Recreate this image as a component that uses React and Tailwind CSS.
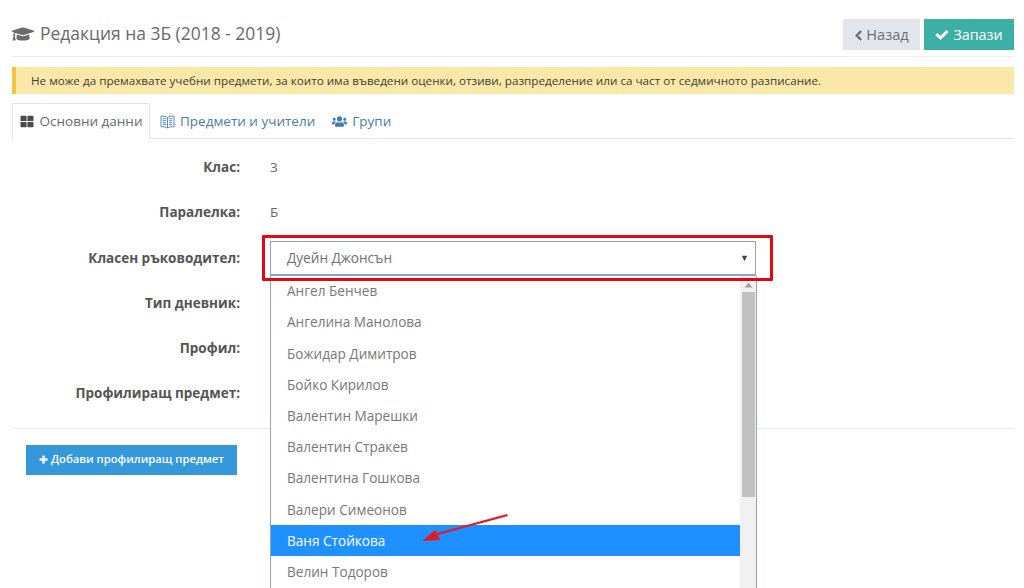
import React from "react";
import { FaGraduationCap, FaChevronLeft, FaCheck, FaThLarge, FaUsers, FaPlus } from "react-icons/fa";

const rows = [
  ["Клас:", "3"],
  ["Паралелка:", "Б"],
  ["Класен ръководител:", ""],
  ["Тип дневник:", ""],
  ["Профил:", ""],
  ["Профилиращ предмет:", ""],
];
const items = ["Ангел Бенчев","Ангелина Манолова","Божидар Димитров","Бойко Кирилов","Валентин Марешки","Валентин Стракев","Валентина Гошкова","Валери Симеонов","Ваня Стойкова","Велин Тодоров"];

function BookIcon() {
  return (
    <svg width="15" height="14" viewBox="0 0 15 14" fill="none" stroke="#5b8ab5" strokeWidth="1">
      <path d="M7.500 2.500C6 1.300 3.500 1 1 1.200V11.800C3.500 11.600 6 12 7.500 13C9 12 11.500 11.600 14 11.800V1.200C11.500 1 9 1.300 7.500 2.500Z" />
      <path d="M7.500 2.500V13M2.700 3.700H6M2.700 5.700H6M2.700 7.700H6M2.700 9.700H6M9 3.700H12.300M9 5.700H12.300M9 7.700H12.300M9 9.700H12.300" />
    </svg>
  );
}

export default function App() {
  return (
    <div className="relative h-[588px] w-[1024px] overflow-hidden bg-white pl-[12px] pr-[10px] font-['Open_Sans',sans-serif] text-[#676a6c]">
      <header className="flex h-[57px] items-start justify-between border-b border-[#eeeeee] pt-[19px]">
        <h1 className="flex h-[29px] items-center gap-[6px] text-[17.45px] font-normal text-[#676a6c]">
          <FaGraduationCap className="h-[18px] w-[22px] text-[#6b6b6b]" />
          Редакция на 3Б (2018 - 2019)
        </h1>
        <div className="flex gap-[4px]">
          <button className="flex h-[31px] w-[77px] items-center justify-center gap-[3px] bg-[#e2e6ec] pt-[1px] text-[14.6px] text-[#6c7077]">
            <FaChevronLeft className="h-[11px] w-[9px]" stroke="currentColor" strokeWidth="40" />Назад
          </button>
          <button className="flex h-[31px] w-[90px] items-center justify-center gap-[4px] bg-[#3cb0a5] pt-[1px] text-[14.3px] text-white">
            <FaCheck className="h-[12px] w-[14px]" stroke="currentColor" strokeWidth="40" />Запази
          </button>
        </div>
      </header>

      <div className="mt-[10px] flex h-[27px] items-center border-l-[4px] border-[#f0c53f] bg-[#f9e8a8] pl-[15px] text-[11.68px] text-[#3e3e36]">
        Не може да премахвате учебни предмети, за които има въведени оценки, отзиви, разпределение или са част от седмичното разписание.
      </div>

      <nav className="mt-[9px] flex h-[36px] items-end border-b border-[#e5e5e5] text-[13.5px]">
        <div className="-mb-px flex h-[36px] w-[138px] items-center justify-center gap-[6px] border border-[#e5e5e5] border-b-white bg-white text-[#676a6c]">
          <FaThLarge className="h-[13px] w-[14px] text-[#4b4b4b]" />Основни данни
        </div>
        <div className="flex h-[35px] items-center gap-[5px] pl-[10px] pt-[2px] text-[#4d7ba6]">
          <BookIcon />Предмети и учители
        </div>
        <div className="flex h-[35px] items-center gap-[5px] pl-[17px] pt-[2px] text-[#4d7ba6]">
          <FaUsers className="h-[15px] w-[15px] text-[#3e7cb5]" />Групи
        </div>
      </nav>

      <section className="mt-[5.700px] flex flex-col">
        {rows.map(([label, value]) => (
          <div key={label} className="flex h-[45.2px] items-center text-[13.5px]">
            <label className="w-[228px] text-right font-bold text-[#545454]">{label}</label>
            <span className="ml-[30px] text-[#676a6c]">{value}</span>
          </div>
        ))}
      </section>

      <hr className="mt-[11.800px] border-[#e9ecef]" />

      <button className="ml-[14px] mt-[16px] flex h-[30px] w-[211px] items-center justify-center gap-[3px] bg-[#3498db] text-[11.25px] font-semibold text-white">
        <FaPlus className="h-[9px] w-[9px]" stroke="currentColor" strokeWidth="40" />Добави профилиращ предмет
      </button>

      <div className="absolute left-[270px] top-[241px] flex h-[35px] w-[486px] items-center justify-between border border-b-[2px] border-[#8fa3c2] pl-[16px] pr-[6px] text-[13.6px] text-[#6f6f6f]">
        <span className="pt-[1px]">Дуейн Джонсън</span>
        <span className="text-[9px] text-[#444]">▼</span>
      </div>
      <div className="absolute left-[270px] top-[276px] flex h-[320px] w-[487px] border-x border-[#8fa3c2] bg-white">
        <ul className="-mt-[0.6px] w-[469px] text-[13.6px] text-[#777777]">
          {items.map((n) => (
            <li key={n} className={`flex h-[31.2px] items-center pl-[16px] pt-[1px] ${n === "Ваня Стойкова" ? "bg-[#1e90ff] text-white" : ""}`}>{n}</li>
          ))}
        </ul>
        <div className="flex w-[16px] flex-col items-center bg-[#f1f1f1] px-[1px]">
          <svg width="9" height="6" viewBox="0 0 9 6" className="mb-[4px] mt-[6px]"><path d="M4.500 0.500 8.500 5.500H0.500Z" fill="#a3a3a3" /></svg>
          <div className="h-[205px] w-[13px] bg-[#c1c1c1]" />
        </div>
      </div>

      <div className="absolute left-[262px] top-[235px] h-[46px] w-[511px] rounded-[1px] border-[3px] border-[#e30613]" />
      <svg className="absolute left-[420px] top-[513px]" width="92" height="32" viewBox="0 0 92 32">
        <path d="M88 3 L18 22 L20 27 L2 28 L15 17 L17 20 L87 1 Z" fill="#df1c26" />
      </svg>
    </div>
  );
}
